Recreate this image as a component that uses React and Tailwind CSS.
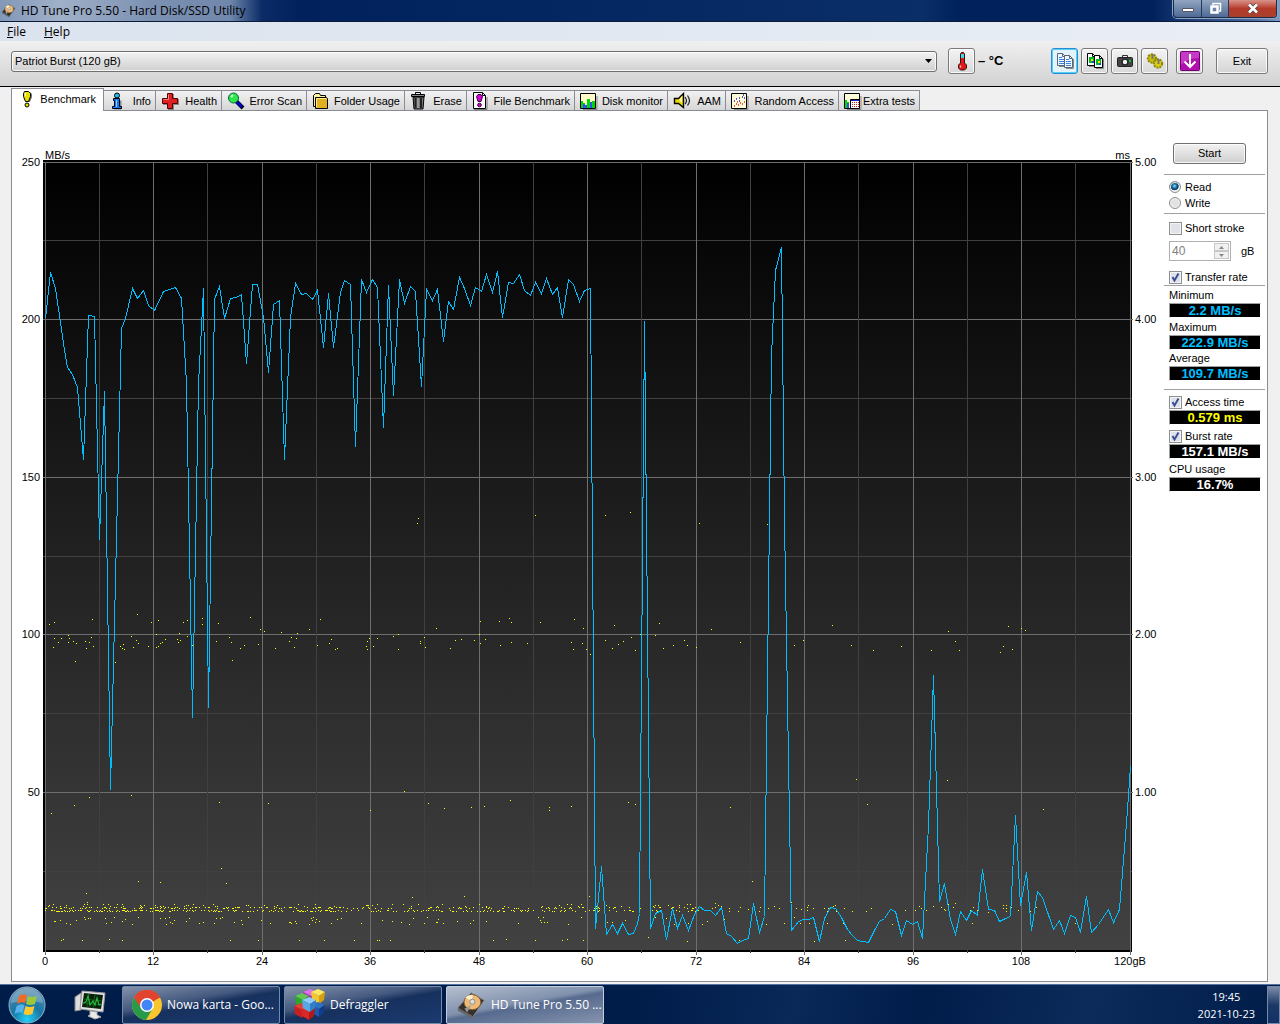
import React, { useState } from "react";

const BenchmarkIcon = () => (
  <svg width="16" height="18" viewBox="0 0 16 18">
    <path d="M6 2h5l2 2v3l-2 5H8L5 7V4z" fill="#777" />
    <path d="M5.500 1.500h4l2 2v3l-2 5h-3l-2-5v-3z" fill="#e8e000" stroke="#000" />
    <circle cx="8" cy="15" r="2" fill="#e8e000" stroke="#000" />
    <path d="M6.500 3v3" stroke="#fff" />
  </svg>
);

const InfoIcon = () => (
  <svg width="16" height="18" viewBox="0 0 16 18">
    <path d="M5.500 8.500h7v9h-8" fill="#888" />
    <circle cx="8" cy="3.500" r="2.500" fill="#29b6f6" stroke="#000" />
    <path d="M4.500 6.500h6v8h2v2h-9v-2h2v-6h-1z" fill="#1976ff" stroke="#000" />
    <path d="M7.500 8v7" stroke="#7fd4ff" />
  </svg>
);

const HealthIcon = () => (
  <svg width="18" height="18" viewBox="0 0 18 18">
    <path d="M7 2h6v5h5v6h-5v5H7v-5H2V7h5z" fill="#888" />
    <path d="M6.500 1.500h5v5h5v5h-5v5h-5v-5h-5v-5h5z" fill="#e02020" stroke="#500" />
    <path d="M7.500 2.500v5h-5" stroke="#ff8080" fill="none" />
  </svg>
);

const SearchIcon = () => (
  <svg width="18" height="18" viewBox="0 0 18 18">
    <path d="M9 9l7 7" stroke="#000" strokeWidth="4" />
    <path d="M10 10l5 5" stroke="#0000c8" strokeWidth="3" />
    <circle cx="6.500" cy="6" r="5" fill="#2ee84a" stroke="#064" />
    <path d="M4 5l2-2" stroke="#dfffe4" strokeWidth="2" />
  </svg>
);

const FolderIcon = () => (
  <svg width="17" height="18" viewBox="0 0 17 18">
    <path d="M1.500 14.500v-11l2-2h4l1 2h5v11z" fill="#fff29a" stroke="#000" />
    <path d="M3.500 5.500h11l1 1v10h-12z" fill="#e0b020" stroke="#000" />
    <path d="M4.500 15V6.500H14" stroke="#fff0a0" fill="none" />
  </svg>
);

const TrashIcon = () => (
  <svg width="16" height="18" viewBox="0 0 16 18">
    <path d="M5.500 2V.5h5V2" fill="none" stroke="#000" />
    <path d="M1.500 2.500h13v2h-13z" fill="#888" stroke="#000" />
    <path d="M3 5h11l-1 12H4z" fill="#777" stroke="#000" />
    <path d="M5.500 6v10M11 6v10" stroke="#222" strokeWidth="2" />
    <path d="M8 6v10" stroke="#bbb" />
  </svg>
);

const FileBenchIcon = () => (
  <svg width="16" height="18" viewBox="0 0 16 18">
    <path d="M2 17.500h13V5" stroke="#777" fill="none" />
    <path d="M1.500.500h9l3 3v13h-12z" fill="#fff" stroke="#000" />
    <path d="M10.500.500v3h3" fill="none" stroke="#000" />
    <path d="M6 2.500h3l1.500 2-1.500 5H6L4.500 4.500z" fill="#d800d8" stroke="#303" />
    <circle cx="7.500" cy="13" r="1.800" fill="#d800d8" stroke="#303" />
  </svg>
);

const DiskMonitorIcon = () => (
  <svg width="18" height="17" viewBox="0 0 18 17">
    <path d="M3 16.500h14V3" stroke="#888" fill="none" />
    <path d="M.500.500h15v15H.500z" fill="#fffbc8" stroke="#000" />
    <path d="M1 15V8h2v2h2v5z M7 15V6h3v9z M12 15V8h3v7z" fill="#00d800" />
    <path d="M3 15v-4h2v4z M5 15v-3h2v3z M10 15V9h2v6z" fill="#3050ff" />
  </svg>
);

const SpeakerIcon = () => (
  <svg width="18" height="18" viewBox="0 0 18 18">
    <path d="M1.500 6.500h4l5-5v14l-5-4h-4z" fill="#e8d800" stroke="#000" strokeWidth="1.400" />
    <path d="M6 8l3-4v7z" fill="#fff8a0" />
    <path d="M12 5q3 4 0 7M14.500 3.500q4 5.500 0 10" fill="none" stroke="#222" strokeWidth="1.200" />
  </svg>
);

const RandomIcon = () => (
  <svg width="18" height="17" viewBox="0 0 18 17">
    <path d="M3 16.500h14V3" stroke="#888" fill="none" />
    <path d="M.500.500h15v15H.500z" fill="#fffbd8" stroke="#000" />
    <path d="M3 8h1M5 6h1M8 8h1M8 5h1M11 4h1M12 2h1M13 5h1" stroke="#22c" strokeWidth="1.500" />
    <path d="M3 13h1M5 11h1M7 12h1M9 10h1M6 9h1M11 11h1M13 9h1" stroke="#e22" strokeWidth="1.500" />
  </svg>
);

const ExtraIcon = () => (
  <svg width="18" height="17" viewBox="0 0 18 17">
    <path d="M3 16.500h14V3" stroke="#888" fill="none" />
    <path d="M.500.500h15v15H.500z" fill="#fffbd8" stroke="#000" />
    <path d="M1 15V7h2v2h2v6z" fill="#00d800" />
    <path d="M3 15v-5h2v5z" fill="#3050ff" />
    <path d="M6.500 6.500h9v9h-9z" fill="#fff" stroke="#000" />
    <path d="M7 7.500h8" stroke="#22c" />
    <path d="M8 9.500h7M8 11.500h7M8 13.500h7" stroke="#c22" strokeDasharray="1 1" />
  </svg>
);

const tabs = [
  { name: "Info", icon: InfoIcon, width: "w-[52px]" },
  { name: "Health", icon: HealthIcon, width: "w-[66px]" },
  { name: "Error Scan", icon: SearchIcon, width: "w-[85px]" },
  { name: "Folder Usage", icon: FolderIcon, width: "w-[98px]" },
  { name: "Erase", icon: TrashIcon, width: "w-[62px]" },
  { name: "File Benchmark", icon: FileBenchIcon, width: "w-[108px]" },
  { name: "Disk monitor", icon: DiskMonitorIcon, width: "w-[93px]" },
  { name: "AAM", icon: SpeakerIcon, width: "w-[58px]" },
  { name: "Random Access", icon: RandomIcon, width: "w-[113px]" },
  { name: "Extra tests", icon: ExtraIcon, width: "w-[81px]" },
];

const DriveIcon = ({ size }) => (
  <svg width={size} height={size} viewBox="0 0 32 32" className="shrink-0">
    <path d="M2 19L16 3l14 8-13 19z" fill="#33302e" stroke="#888" />
    <path d="M2 19l15 8v3L2 22z" fill="#666" />
    <ellipse cx="17.500" cy="13" rx="9" ry="8" fill="#eebb77" stroke="#7a5a30" />
    <path d="M17 12L10 8a9 8 0 0 1 8-3z" fill="#fff0cc" />
    <circle cx="17.500" cy="12.500" r="2.800" fill="#ddd" stroke="#888" />
    <path d="M9 20l7-4-4 8z" fill="#999" />
  </svg>
);

const transferRate = [
  [45, 318], [50, 272], [55, 288], [60, 322], [63, 343], [67, 367], [72, 374], [77, 387], [83, 459],
  [88, 315], [94, 316], [99, 539], [104, 391], [110, 789], [121, 328], [125, 318], [132, 288],
  [137, 298], [143, 290], [148, 305], [154, 310], [163, 291], [175, 287], [181, 298], [186, 383],
  [192, 717], [198, 383], [203, 288], [208, 707], [214, 299], [219, 286], [224, 318], [230, 298],
  [236, 297], [241, 294], [246, 363], [252, 284], [257, 284], [263, 317], [268, 372], [273, 304],
  [279, 300], [284, 459], [290, 317], [295, 283], [301, 294], [306, 293], [312, 299], [317, 290],
  [323, 347], [328, 293], [333, 347], [340, 292], [344, 280], [350, 284], [355, 446], [361, 279],
  [366, 292], [372, 279], [377, 287], [383, 427], [388, 285], [393, 395], [399, 279], [404, 303],
  [410, 286], [415, 291], [421, 386], [426, 289], [432, 300], [437, 289], [443, 341], [448, 301],
  [453, 309], [459, 277], [464, 288], [470, 305], [475, 287], [481, 291], [486, 274], [492, 292],
  [497, 271], [502, 317], [508, 282], [513, 283], [519, 274], [524, 290], [530, 295], [535, 282],
  [541, 293], [546, 278], [552, 294], [557, 287], [562, 317], [568, 279], [573, 284], [579, 301],
  [584, 290], [590, 288], [595, 928], [601, 866], [606, 934], [612, 924], [617, 933], [622, 923],
  [628, 934], [633, 933], [637, 923], [639, 913], [644, 321], [650, 928], [655, 913], [661, 910],
  [666, 939], [672, 908], [677, 928], [682, 915], [688, 930], [694, 914], [699, 906], [704, 910],
  [710, 910], [715, 915], [721, 907], [726, 933], [731, 936], [737, 943], [742, 940], [748, 938],
  [753, 903], [759, 932], [764, 916], [771, 355], [775, 270], [781, 247], [784, 520], [788, 760],
  [791, 930], [798, 921], [803, 919], [808, 919], [813, 917], [819, 941], [824, 918], [830, 907],
  [835, 908], [841, 917], [847, 929], [852, 935], [857, 940], [868, 942], [874, 930], [879, 921],
  [884, 918], [890, 909], [895, 911], [901, 935], [906, 920], [912, 924], [917, 921], [922, 938],
  [928, 825], [933, 675], [939, 901], [944, 883], [950, 919], [955, 934], [960, 911], [966, 920],
  [971, 910], [977, 915], [982, 869], [988, 909], [994, 910], [999, 921], [1005, 918], [1010, 916],
  [1015, 815], [1020, 905], [1026, 872], [1031, 930], [1037, 891], [1042, 897], [1053, 929],
  [1059, 920], [1064, 933], [1070, 915], [1075, 917], [1080, 932], [1086, 896], [1091, 932],
  [1098, 924], [1108, 909], [1113, 922], [1119, 909], [1126, 823], [1130, 766],
];

const accessTimes = [
  [417, 523], [418, 518], [535, 515], [605, 515], [630, 512], [699, 523], [767, 524],
  [49, 624], [54, 622], [92, 619], [137, 614], [151, 622], [158, 620], [183, 622], [187, 620],
  [202, 618], [202, 624], [218, 623], [250, 617], [260, 629], [264, 631], [281, 632], [297, 633],
  [309, 629], [320, 619], [54, 638], [61, 638], [68, 635], [69, 638], [58, 642], [53, 647],
  [68, 642], [73, 641], [76, 643], [85, 641], [89, 642], [91, 637], [86, 648], [93, 646],
  [75, 661], [115, 662], [114, 627], [123, 644], [120, 646], [122, 648], [124, 649], [131, 636],
  [136, 640], [138, 643], [133, 647], [148, 646], [156, 647], [158, 646], [160, 643], [162, 642],
  [165, 639], [156, 634], [179, 633], [177, 639], [178, 642], [180, 640], [187, 636], [191, 639],
  [192, 645], [216, 641], [229, 637], [231, 642], [240, 648], [244, 645], [232, 660], [258, 644],
  [275, 648], [289, 641], [291, 637], [296, 638], [294, 647], [317, 645], [331, 639], [329, 643],
  [335, 649], [337, 648], [369, 638], [367, 641], [377, 638], [366, 646], [367, 649], [373, 646],
  [393, 636], [398, 634], [398, 649], [424, 637], [420, 641], [420, 643], [425, 647], [436, 628],
  [450, 648], [455, 640], [461, 639], [474, 640], [485, 639], [480, 643], [480, 621], [479, 634],
  [499, 621], [500, 645], [509, 618], [511, 622], [511, 642], [527, 643], [540, 622], [574, 619],
  [583, 628], [571, 642], [582, 643], [573, 649], [586, 649], [590, 654], [614, 625], [647, 622],
  [659, 623], [605, 640], [612, 648], [618, 644], [623, 641], [631, 637], [635, 650], [640, 634],
  [655, 635], [663, 648], [673, 645], [684, 640], [687, 645], [696, 647], [711, 629], [740, 642],
  [794, 645], [803, 640], [832, 625], [851, 645], [873, 650], [901, 646], [931, 650], [948, 631],
  [955, 641], [959, 650], [1000, 652], [1003, 646], [1008, 626], [1012, 649], [1021, 628],
  [1025, 630], [51, 813], [74, 805], [89, 797], [131, 795], [219, 802], [268, 803], [370, 810],
  [404, 791], [428, 803], [444, 808], [471, 807], [484, 806], [510, 800], [549, 807], [549, 810],
  [571, 806], [628, 802], [635, 804], [730, 807], [856, 779], [867, 804], [947, 780], [1043, 809],
  [752, 881], [221, 868], [138, 881], [160, 882], [226, 883], [86, 893], [87, 902], [412, 897],
  [464, 896], [589, 896], [61, 940], [63, 939], [82, 940], [109, 939], [122, 940], [230, 940],
  [258, 940], [299, 940], [324, 940], [354, 940], [377, 940], [379, 940], [390, 940], [493, 940],
  [506, 939], [535, 940], [562, 940], [567, 939], [583, 940], [648, 937], [687, 941], [739, 940],
  [814, 941], [845, 940], [712, 908], [715, 903], [718, 905], [721, 906], [715, 907], [729, 908],
  [729, 911], [738, 911], [740, 907], [748, 909], [760, 907], [759, 911], [768, 908], [774, 906],
  [779, 908], [791, 908], [791, 902], [796, 908], [801, 909], [807, 907], [808, 905], [807, 910],
  [813, 908], [824, 908], [827, 911], [828, 908], [833, 906], [835, 905], [836, 911], [844, 908],
  [852, 911], [866, 911], [871, 908], [905, 910], [915, 910], [919, 906], [921, 908], [926, 910],
  [933, 906], [941, 907], [945, 910], [944, 909], [948, 904], [953, 907], [955, 903], [961, 912],
  [973, 907], [970, 910], [977, 910], [988, 912], [1003, 905], [1006, 905], [1003, 908],
  [1006, 908], [1006, 911], [1011, 907], [1018, 910], [1029, 908], [1030, 911], [1036, 907],
  [766, 924], [784, 923], [794, 917], [800, 923], [809, 923], [827, 923], [843, 923], [892, 924],
  [972, 923], [1075, 923], [724, 919], [724, 923],
];

// the fast accesses sit in a tight band near the bottom, too many to list
const fastAccesses = () => {
  const dots = [];
  let seed = 7;
  const rand = () => {
    seed = (seed * 16807) % 2147483647;
    return seed / 2147483647;
  };
  for (let x = 45; x < 708; x++) {
    const density = x < 180 ? 1 : x < 350 ? 0.75 : x < 600 ? 0.55 : 0.35;
    if (rand() < 0.42 * density) dots.push([x, rand() < 0.5 ? 907 : 908]);
    if (rand() < 0.55 * density) dots.push([x, rand() < 0.5 ? 910 : 911]);
    if (rand() < 0.14 * density) dots.push([x, 904 + Math.floor(rand() * 3)]);
    if (rand() < 0.2 * density) dots.push([x, rand() < 0.3 ? 917 + Math.floor(rand() * 3) : 920 + Math.floor(rand() * 5)]);
  }
  return dots;
};

const allDots = [...accessTimes, ...fastAccesses()];
const columns = Array.from({ length: 21 }, (_, i) => Math.floor(45 + i * 54.25));
const rows = Array.from({ length: 11 }, (_, i) => Math.floor(162 + i * 78.8));

const Chart = () => (
  <svg
    viewBox="12 111 1150 870"
    className="block min-w-0 flex-1 font-['Liberation_Sans',Arial,sans-serif] text-[11px]"
    role="img"
    aria-label="Transfer rate and access time"
  >
    <defs>
      <linearGradient id="plot" x1="0" y1="0" x2="0" y2="1">
        <stop offset="0" stopColor="#000" />
        <stop offset="1" stopColor="#424242" />
      </linearGradient>
    </defs>
    <g shapeRendering="crispEdges">
      <rect x="43" y="160" width="1089" height="792" fill="#000" />
      <rect x="45" y="162" width="1086" height="788" fill="url(#plot)" />
      {rows.slice(0, 10).map((y, i) => (
        <rect key={y} x="43" y={y} width={i % 2 ? 1089 : 1090} height="1" fill={i % 2 ? "#404040" : "#6e6e6e"} />
      ))}
      <rect x="45" y="950" width="1087" height="2" fill="#000" />
      {columns.map((x, i) => (
        <rect key={x} x={x} y="162" width="1" height={i % 2 ? 791 : 793} fill={i % 2 ? "#404040" : "#6e6e6e"} />
      ))}
      {allDots.map(([x, y], i) => (
        <rect key={i} x={x} y={y} width="1" height="1" fill="#ff0" />
      ))}
      <polyline
        points={transferRate.map((p) => p.join(",")).join(" ")}
        transform="translate(0.5 0.5)"
        fill="none"
        stroke="#00bfff"
      />
    </g>
    <text x="45" y="159">MB/s</text>
    <text x="1130" y="159" textAnchor="end">ms</text>
    {[250, 200, 150, 100, 50].map((n, i) => (
      <text key={n} x="40" y={rows[i * 2] + 4} textAnchor="end">{n}</text>
    ))}
    {["5.00", "4.00", "3.00", "2.00", "1.00"].map((n, i) => (
      <text key={n} x="1135" y={rows[i * 2] + 4}>{n}</text>
    ))}
    {columns.filter((_, i) => i % 2 === 0).map((x, i) => (
      <text key={x} x={x} y="965" textAnchor="middle">{i === 10 ? "120gB" : i * 12}</text>
    ))}
  </svg>
);

const ToolButton = ({ label, active, children }) => (
  <button
    aria-label={label}
    className={
      "flex h-[26px] w-[27px] shrink-0 items-center justify-center rounded-[3px] border " +
      (active
        ? "border-[#2a8dd4] bg-[#e4f2fa] ring-1 ring-inset ring-[#4fd0f5]"
        : "border-[#7a7a7a] bg-gradient-to-b from-[#f4f4f4] to-[#d8d8d8] ring-1 ring-inset ring-white/80")
    }
  >
    {children}
  </button>
);

const Pages = ({ picture }) => (
  <svg width="18" height="18" viewBox="0 0 18 18" className="shrink-0">
    {[[1, 1], [8, 3]].map(([x, y]) => (
      <g key={x} transform={`translate(${x} ${y})`}>
        <path d="M2 13.500h7.500V4" fill="none" stroke="#888" />
        <path d="M.500.500h5l3 3v9h-8z" fill={picture ? "#fff" : "#eef6ff"} stroke={picture ? "#000" : "#567"} />
        <path d="M5.500.500v3h3" fill="none" stroke={picture ? "#000" : "#567"} />
        {picture ? (
          <>
            <path d="M2 4h5v6H2z" fill="#0b2" />
            <path d="M4 6h2v2H4z" fill="#fd0" />
            <path d="M5 8h2v2H5z" fill="#15c" />
          </>
        ) : (
          <path d="M2 4.500h3M2 6.500h5M2 8.500h5M2 10.500h5" stroke="#3b82e0" />
        )}
      </g>
    ))}
  </svg>
);

const Check = ({ id, label, checked, onChange }) => (
  <label htmlFor={id} className="flex h-4 items-center gap-[3px] pl-[5px]">
    <span className="grid">
      <input
        id={id}
        type="checkbox"
        checked={checked}
        onChange={onChange}
        className="size-[13px] appearance-none border border-[#8e8f8f] bg-[#dfe3e8] shadow-[inset_0_0_0_1px_#f4f4f4] [grid-area:1/1]"
      />
      {checked && (
        <svg width="13" height="13" viewBox="0 0 13 13" className="pointer-events-none [grid-area:1/1]">
          <path d="M3.500 6l2 3.500 4-7" fill="none" stroke="#3c4f9a" strokeWidth="2" />
        </svg>
      )}
    </span>
    {label}
  </label>
);

const Radio = ({ label, checked, onChange }) => (
  <label className="flex h-4 items-center gap-1 pl-[5px]">
    <input
      type="radio"
      name="mode"
      checked={checked}
      onChange={onChange}
      className="size-3 appearance-none rounded-full border border-[#8e8f8f] bg-[#e2e2e2] shadow-[inset_0_0_0_1px_#f4f4f4] checked:bg-[radial-gradient(circle_at_45%_40%,#9fe4ff_0,#1878ac_25%,#0c3a5c_48%,#e8eef2_56%)]"
    />
    {label}
  </label>
);

const Value = ({ color, children }) => (
  <div className={"ml-[5px] mr-1 h-[15px] border border-b-white border-r-white border-l-[#a0a0a0] border-t-[#a0a0a0] bg-black text-center text-[13px] leading-[14px] font-bold " + color}>
    {children}
  </div>
);

const Stat = ({ label, value, color }) => (
  <div>
    <div className="h-4 pl-[5px] leading-4">{label}</div>
    <Value color={color}>{value}</Value>
  </div>
);

const Line = () => <hr className="border-[#a0a0a0]" />;

const Sidebar = () => {
  const [mode, setMode] = useState("read");
  const [options, setOptions] = useState({ short: false, transfer: true, access: true, burst: true });

  const toggle = (name) => () => {
    setOptions((prev) => ({ ...prev, [name]: !prev[name] }));
  };

  return (
    <aside className="w-[105px] shrink-0 pt-8 pr-0.5 pl-0.5">
      <button className="ml-[9px] block h-[21px] w-[73px] rounded-[3px] border border-[#707070] bg-gradient-to-b from-[#f2f2f2] to-[#cfcfcf] ring-1 ring-inset ring-white/80">
        Start
      </button>
      <div className="mt-2.5"><Line /></div>
      <div className="mt-1 mb-0.5">
        <Radio label="Read" checked={mode === "read"} onChange={() => setMode("read")} />
        <Radio label="Write" checked={mode === "write"} onChange={() => setMode("write")} />
      </div>
      <Line />
      <div className="mt-1.5">
        <Check id="short" label="Short stroke" checked={options.short} onChange={toggle("short")} />
      </div>
      <div className="mt-[5px] mb-2 flex items-center gap-2.5 pl-[5px]">
        <div className="flex h-5 w-[62px] border border-[#b0b0b0] bg-white p-px">
          <input aria-label="Short stroke size" disabled defaultValue="40" className="min-w-0 flex-1 pl-px text-xs text-[#808080]" />
          <div className="flex w-[15px] flex-col">
            <button aria-label="Increase" className="flex flex-1 items-center justify-center border border-[#c8c8c8] bg-[#f0f0f0] text-[#888]">
              <svg width="5" height="3" viewBox="0 0 5 3"><path d="M0 3h5L2.500 0z" fill="currentColor" /></svg>
            </button>
            <button aria-label="Decrease" className="flex flex-1 items-center justify-center border border-[#c8c8c8] bg-[#f0f0f0] text-[#888]">
              <svg width="5" height="3" viewBox="0 0 5 3"><path d="M0 0h5L2.500 3z" fill="currentColor" /></svg>
            </button>
          </div>
        </div>
        <span>gB</span>
      </div>
      <Check id="transfer" label="Transfer rate" checked={options.transfer} onChange={toggle("transfer")} />
      <Line />
      <div className="mt-px mb-2">
        <Stat label="Minimum" value="2.2 MB/s" color="text-[#00bfff]" />
        <div className="mt-px"><Stat label="Maximum" value="222.9 MB/s" color="text-[#00bfff]" /></div>
        <Stat label="Average" value="109.7 MB/s" color="text-[#00bfff]" />
      </div>
      <Line />
      <div className="mt-1 flex flex-col gap-0.5">
        <div>
          <Check id="access" label="Access time" checked={options.access} onChange={toggle("access")} />
          <Value color="text-[#ffff00]">0.579 ms</Value>
        </div>
        <div className="pt-px">
          <Check id="burst" label="Burst rate" checked={options.burst} onChange={toggle("burst")} />
          <Value color="text-white">157.1 MB/s</Value>
        </div>
        <Stat label="CPU usage" value="16.7%" color="text-white" />
      </div>
    </aside>
  );
};

const ChromeIcon = () => (
  <svg width="30" height="30" viewBox="0 0 30 30" className="shrink-0">
    <circle cx="15" cy="15" r="15" fill="#fbc52d" />
    <path d="M15 15L2 7.500a15 15 0 0 1 26 0z" fill="#e0432f" />
    <path d="M2 7.500A15 15 0 0 0 14 30l7-12-6-3z" fill="#279b4b" />
    <path d="M15 8h13.200a15 15 0 0 0-26.200-.500L9 18z" fill="#e0432f" />
    <circle cx="15" cy="15" r="7" fill="#fff" />
    <circle cx="15" cy="15" r="5.500" fill="#4285f4" />
  </svg>
);

const Cube = ({ x, y, top, left, right }) => (
  <g transform={`translate(${x} ${y})`} strokeLinejoin="round">
    <path d="M0 3l7-3 7 3-6 4z" fill={top} />
    <path d="M0 3l8 4v8l-7-4z" fill={left} />
    <path d="M14 3L8 7v8l5-4z" fill={right} />
  </g>
);

const DefragglerIcon = () => (
  <svg width="31" height="31" viewBox="0 0 31 31" className="shrink-0">
    <Cube x={9} y={0} top="#e070e8" left="#b030c0" right="#902098" />
    <Cube x={17} y={0} top="#ffe860" left="#f0c830" right="#d8a010" />
    <Cube x={1} y={4} top="#60c850" left="#28a828" right="#108018" />
    <Cube x={17} y={13} top="#3070c0" left="#2058b0" right="#103c88" />
    <Cube x={0} y={14} top="#e04038" left="#c82020" right="#a01010" />
    <Cube x={7} y={16} top="#e85048" left="#d82828" right="#b01818" />
    <Cube x={8} y={8} top="#90ccf8" left="#58a8e8" right="#3080c8" />
  </svg>
);

const StartOrb = () => (
  <svg width="38" height="38" viewBox="0 0 38 38">
    <defs>
      <radialGradient id="orb" cx="0.500" cy="0.900" r="0.900">
        <stop offset="0" stopColor="#20d0f8" />
        <stop offset="0.450" stopColor="#1878a8" />
        <stop offset="1" stopColor="#5c88a8" />
      </radialGradient>
    </defs>
    <circle cx="19" cy="19" r="18" fill="url(#orb)" stroke="#8fb4cc" />
    <path d="M3 17a16 15 0 0 1 32 0q-15-4-32 0z" fill="#fff" opacity=".25" />
    <path d="M11 10q4-3 8-1l-2 8q-4-2-8 1z" fill="#f06a28" />
    <path d="M20 10q4 2 9 0l-2 8q-5 2-9 0z" fill="#9cc83c" />
    <path d="M8.500 20q4-3 8-1l-2 8q-4-2-8 1z" fill="#58b0ec" />
    <path d="M17.500 20q4 2 9 0l-2 8q-5 2-9 0z" fill="#fcc830" />
  </svg>
);

const MonitorIcon = () => (
  <svg width="32" height="30" viewBox="0 0 32 30">
    <path d="M1 7l6-4v17l-6 1z" fill="#ddd" stroke="#888" />
    <path d="M8 1l23 2-2 19-23-3z" fill="#e4e4e4" stroke="#999" />
    <path d="M10 3l19 2-2 14-19-2z" fill="#0a200c" />
    <path d="M10 9l18 2M10 13l17 2M15 4l-2 13M21 4l-2 14" stroke="#145c1c" />
    <path d="M9 13l3-1 2-6 2 9 3-4 2 4 2-7 2 7 2-1" fill="none" stroke="#22b838" strokeWidth="1.200" />
    <path d="M16 21l7 1v3l4 2-6 2-7-3 2-1z" fill="#e8e8e8" stroke="#aaa" />
  </svg>
);

const TaskButton = ({ active, icon, children }) => (
  <button
    className={
      "flex h-[38px] w-[158px] items-center gap-[5px] rounded-[2px] border px-[9px] text-left text-xs whitespace-nowrap text-white " +
      (active
        ? "border-[#c2cddd] bg-[linear-gradient(170deg,#b4bece_0,#8191ad_45%,#576b8f_52%,#8593ad_100%)]"
        : "border-[#7488a8] bg-[linear-gradient(170deg,#8492aa_0,#44597f_38%,#17315e_50%,#1b3a70_100%)]")
    }
  >
    {icon}
    <span>{children}</span>
  </button>
);

const App = () => {
  const [tab, setTab] = useState("Benchmark");

  return (
    <div className="flex min-h-screen flex-col bg-[#f0f0f0] font-['Liberation_Sans',Arial,sans-serif] text-[11px] text-black">
      <header className="flex h-[22px] items-start border-b border-[#0b1b38] bg-[linear-gradient(90deg,#8298b8_0,#a0b0c8_60px,#7c91b2_150px,#7087ac_230px,#0a2b66_262px,#00215c_300px,#0a2e68_72%,#00215c_75%,#00215c_90%,#4c6c9e_98%,#7f9cc4_100%)] font-['Open_Sans','Noto_Sans',sans-serif]">
        <div className="flex h-[21px] flex-1 items-center gap-[5px] pl-px text-[12px] whitespace-nowrap">
          <DriveIcon size={15} />
          <h1>HD Tune Pro 5.50 - Hard Disk/SSD Utility</h1>
        </div>
        <div className="mr-[3px] flex h-[18px] overflow-hidden rounded-b-[4px] border border-t-0 border-[#1b2c4b] ring-1 ring-[#8fa5c6]">
          <button aria-label="Minimize" className="flex w-[28px] items-center justify-center border-r border-[#24385c] bg-gradient-to-b from-[#93a5c1] to-[#4f6a94] pt-1">
            <svg width="12" height="5" viewBox="0 0 12 5"><path d="M.500.500h11v3H.500z" fill="#fff" stroke="#556" /></svg>
          </button>
          <button aria-label="Restore" className="flex w-[27px] items-center justify-center border-r border-[#24385c] bg-gradient-to-b from-[#93a5c1] to-[#4f6a94]">
            <svg width="13" height="13" viewBox="0 0 13 13">
              <path d="M4 3V1.500h7.500V9H10" fill="none" stroke="#fff" strokeWidth="1.500" />
              <path d="M2.500 4.500h6v6h-6z" fill="none" stroke="#fff" strokeWidth="2.500" />
            </svg>
          </button>
          <button aria-label="Close" className="flex w-[47px] items-center justify-center bg-gradient-to-b from-[#d8938a] via-[#b63a2a] to-[#a8402c]">
            <svg width="12" height="11" viewBox="0 0 12 11">
              <path d="M2 1.500l8 8M10 1.500l-8 8" stroke="#544" strokeWidth="4" />
              <path d="M2 1.500l8 8M10 1.500l-8 8" stroke="#fff" strokeWidth="2.600" />
            </svg>
          </button>
        </div>
      </header>

      <nav className="flex h-[19px] items-center gap-[18px] bg-gradient-to-r from-[#dbe3ee] to-[#e9eef5] pl-[7px] font-['Open_Sans','Noto_Sans',sans-serif] text-xs">
        <button><u>F</u>ile</button>
        <button><u>H</u>elp</button>
      </nav>

      <div className="flex h-[46px] items-center border-b border-black bg-gradient-to-b from-[#f0f0f0] to-[#d2d2d2] pr-3 pb-[5px] pl-[11px]">
        <div className="grid flex-1 items-center">
          <select aria-label="Drive" className="h-[21px] w-full appearance-none rounded-[3px] border border-[#707070] bg-gradient-to-b from-[#f2f2f2] to-[#d0d0d0] pl-[3px] ring-1 ring-inset ring-white/80 [grid-area:1/1]">
            <option>Patriot Burst (120 gB)</option>
          </select>
          <svg width="7" height="4" viewBox="0 0 7 4" className="pointer-events-none mr-[5px] justify-self-end [grid-area:1/1]">
            <path d="M0 0h7L3.500 4z" />
          </svg>
        </div>
        <div className="ml-[11px] flex items-center gap-[3px]">
          <ToolButton label="Temperature">
            <svg width="12" height="19" viewBox="0 0 12 19">
              <path d="M4.500 2l1-1.500h2l1 1.500v9l2 2v3l-2 2h-4l-2-2v-3l2-2z" fill="#e01818" stroke="#311" />
              <path d="M5 2h3v4H5z" fill="#40d8e8" />
              <path d="M4.500 13.500v2" stroke="#ffc0c0" strokeWidth="1.500" />
            </svg>
          </ToolButton>
          <span className="w-[73px] text-[13px] font-bold">– °C</span>
        </div>
        <div className="flex gap-[3px]">
          <ToolButton label="Copy text" active><Pages /></ToolButton>
          <ToolButton label="Copy screenshot"><Pages picture /></ToolButton>
          <ToolButton label="Save screenshot">
            <svg width="16" height="14" viewBox="0 0 16 14">
              <path d="M5.500 3V1.500h5V3" fill="none" stroke="#333" />
              <rect x=".500" y="3.500" width="15" height="9" rx="1" fill="#444" stroke="#222" />
              <circle cx="8" cy="8" r="3.500" fill="#222" />
              <circle cx="8" cy="8" r="2.200" fill="#f4f4f4" />
              <path d="M12 6h2v2h-2z" fill="#0c3" />
            </svg>
          </ToolButton>
          <ToolButton label="Options">
            <svg width="18" height="18" viewBox="0 0 18 18" className="shrink-0">
              <circle cx="6" cy="6.500" r="4.200" fill="#c8bc10" stroke="#8e8600" strokeWidth="2" strokeDasharray="2 1" />
              <circle cx="12" cy="11.500" r="4.200" fill="#d8cc18" stroke="#8e8600" strokeWidth="2" strokeDasharray="2 1" />
              <path d="M6.500 2v5M12.500 7v5" stroke="#777" strokeWidth="2" />
            </svg>
          </ToolButton>
        </div>
        <div className="mx-2 flex">
          <ToolButton label="Download">
            <svg width="20" height="20" viewBox="0 0 20 20" className="shrink-0">
              <rect x=".500" y=".500" width="19" height="19" rx="1" fill="#b010b0" stroke="#700070" />
              <path d="M1 1h18v6Q8 7 1 14z" fill="#d458d4" opacity=".6" />
              <path d="M10 3v13M4.500 10.500L10 16l5.500-5.500" fill="none" stroke="#fff" strokeWidth="2" />
            </svg>
          </ToolButton>
        </div>
        <button className="ml-[5px] h-[26px] w-[52px] rounded-[3px] border border-[#7a7a7a] bg-gradient-to-b from-[#f2f2f2] to-[#d4d4d4] ring-1 ring-inset ring-white/80">
          Exit
        </button>
      </div>

      <main className="flex flex-1 flex-col pr-3 pb-0.5 pl-[11px]">
        <div role="tablist" className="flex h-6 items-end">
          <button
            role="tab"
            aria-selected={tab === "Benchmark"}
            onClick={() => setTab("Benchmark")}
            className="relative z-10 flex h-[23px] w-[93px] items-center justify-between border border-b-0 border-[#898c95] bg-white pr-[7px] pb-0.5 pl-[7px]"
          >
            <BenchmarkIcon />
            Benchmark
          </button>
          {tabs.map(({ name, icon: Icon, width }) => (
            <button
              key={name}
              role="tab"
              aria-selected={tab === name}
              onClick={() => setTab(name)}
              className={
                "flex h-[21px] items-center justify-between border border-l-0 border-[#898c95] bg-gradient-to-b from-[#f2f2f2] to-[#d6d6d6] pt-px pr-1 pl-[5px] whitespace-nowrap " +
                width
              }
            >
              <Icon />
              {name}
            </button>
          ))}
        </div>
        <section className="-mt-px flex flex-1 items-start border border-[#898c95] bg-white">
          <Chart />
          <Sidebar />
        </section>
      </main>

      <footer className="flex h-10 items-center border-t border-[#5572a0] bg-[linear-gradient(100deg,#001d4a_0,#001d4a_50%,#0a2858_62%,#001d4a_72%,#0d2b5a_85%,#001d4a_100%)] font-['Open_Sans','Noto_Sans',sans-serif] text-white">
        <button aria-label="Start menu" className="ml-2"><StartOrb /></button>
        <button aria-label="System monitor" className="ml-7"><MonitorIcon /></button>
        <div className="ml-4 flex flex-1 gap-1">
          <TaskButton icon={<ChromeIcon />}>Nowa karta - Goo...</TaskButton>
          <TaskButton icon={<DefragglerIcon />}>Defraggler</TaskButton>
          <TaskButton active icon={<DriveIcon size={30} />}>HD Tune Pro 5.50 ...</TaskButton>
        </div>
        <div className="mr-3 text-center text-[11px] leading-[17px]">
          <div>19:45</div>
          <div>2021-10-23</div>
        </div>
        <button aria-label="Show desktop" className="h-[38px] w-[13px] border border-[#7488a8] bg-gradient-to-b from-[#7c8ca8] via-[#1c3866] to-[#123068]" />
      </footer>
    </div>
  );
};

export default App;
